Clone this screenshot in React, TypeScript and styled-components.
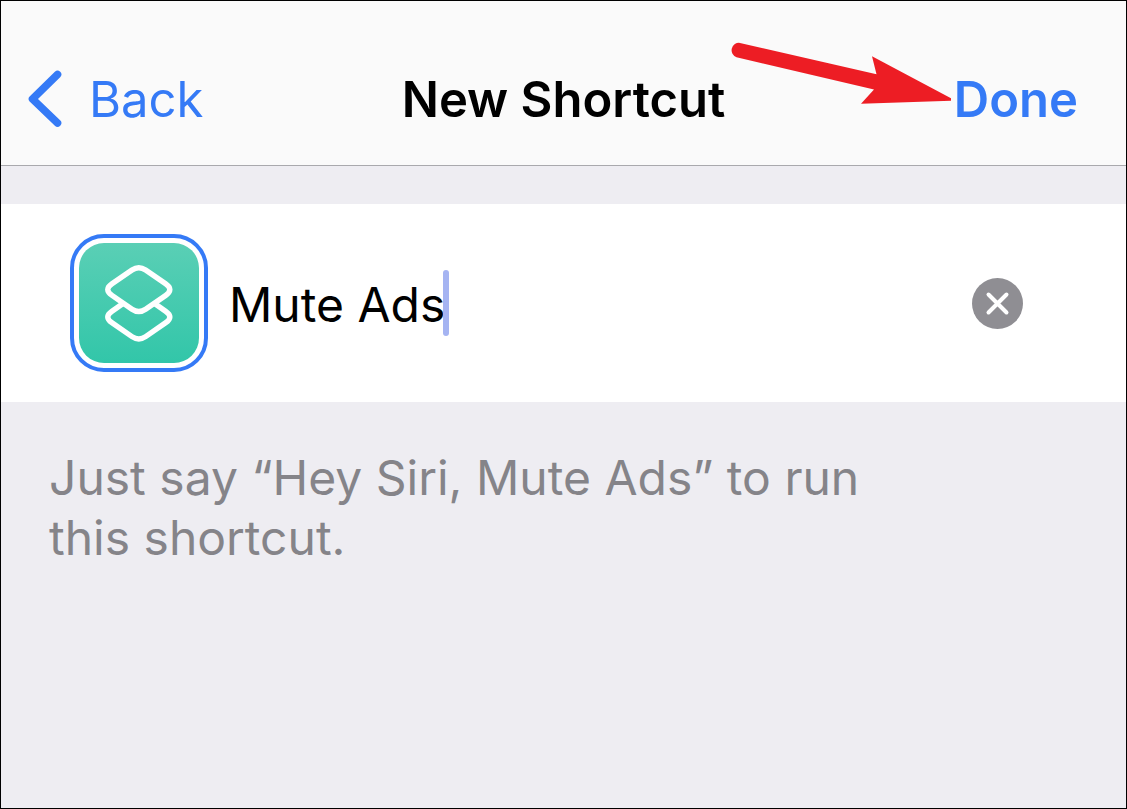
import React, { useState } from "react";
import styled, { createGlobalStyle } from "styled-components";

const GlobalStyle = createGlobalStyle`
  *, *::before, *::after { box-sizing: border-box; }
  body {
    margin: 0;
    background: #eeedf2;
    font-family: Inter, "Liberation Sans", sans-serif;
    font-size: 48px;
    line-height: 60px;
    color: #000;
  }
  button, input { font: inherit; }
`;

const Screen = styled.main`
  min-height: 100vh;
  background: #eeedf2;
  border: 1px solid #000;
`;

const NavBar = styled.header`
  display: grid;
  grid-template-columns: 1fr auto 1fr;
  align-items: center;
  padding: 69px 26px 35px;
  background: #fafafa;
  border-bottom: 1px solid #a9a9ad;
  font-size: 49px;
`;

const NavButton = styled.button<{ $strong?: boolean }>`
  display: flex;
  align-items: center;
  gap: 26px;
  padding: 0;
  border: 0;
  background: none;
  color: #357af6;
  font-weight: ${(p) => (p.$strong ? 600 : 400)};
  cursor: pointer;
`;

const Title = styled.h1`
  margin: 0;
  font-size: inherit;
  font-weight: 600;
`;

const NavStart = styled.div`
  display: flex;
`;

const NavEnd = styled.div`
  position: relative;
  justify-self: end;
  display: flex;
  margin-right: 22px;
`;

const Pointer = styled.svg`
  position: absolute;
  top: -28px;
  right: 100%;
  margin-right: 3px;
  pointer-events: none;
`;

const NameRow = styled.section`
  display: flex;
  align-items: center;
  gap: 21px;
  margin-top: 38px;
  padding: 30px 103px 30px 69px;
  background: #fff;
`;

const IconButton = styled.button`
  display: block;
  flex: none;
  padding: 0;
  border: 0;
  background: none;
  cursor: pointer;

  svg { display: block; }
`;

const Field = styled.div`
  position: relative;
  display: flex;
  margin-right: auto;
`;

const NameInput = styled.input`
  field-sizing: content;
  min-width: 10px;
  height: 62px;
  padding: 2px 0 0;
  border: 0;
  outline: 0;
  background: none;
  color: #000;
  caret-color: transparent;
`;

const Caret = styled.span`
  position: absolute;
  top: -2px;
  right: -4px;
  width: 6px;
  height: 66px;
  border-radius: 3px;
  background: #a5b4f2;
`;

const Hint = styled.p`
  max-width: 920px;
  margin: 0;
  padding: 46px 48px;
  color: #858489;
`;

function ShortcutIcon() {
  return (
    <svg width="138" height="138" viewBox="0 0 138 138" fill="none" aria-hidden="true">
      <defs>
        <linearGradient id="tile" x1="0" y1="0" x2="0" y2="1">
          <stop offset="0" stopColor="#5acfb5" />
          <stop offset="1" stopColor="#32c6a9" />
        </linearGradient>
      </defs>
      <rect x="2" y="2" width="134" height="134" rx="32" stroke="#357af6" strokeWidth="4" />
      <rect x="9" y="9" width="120" height="120" rx="25" fill="url(#tile)" />
      <g stroke="#fff" strokeWidth="5.4" strokeLinejoin="round">
        <path d="M62 36Q68.8 31.3 75.6 36L95.6 49.8Q104.1 55.6 95.6 61.4L75.6 75.2Q68.8 79.9 62 75.2L42 61.4Q33.5 55.6 42 49.8Z" />
        <path d="M53.4 69.3L42 77.2Q33.5 83 42 88.8L62 102.6Q68.8 107.3 75.6 102.6L95.6 88.8Q104.1 83 95.6 77.2L84.2 69.3" />
      </g>
    </svg>
  );
}

export default function App() {
  const [name, setName] = useState("Mute Ads");

  return (
    <>
      <GlobalStyle />
      <Screen>
        <NavBar>
          <NavStart>
            <NavButton type="button">
              <svg width="36" height="60" viewBox="0 0 36 60" fill="none" aria-hidden="true">
                <path d="M30.5 4.5L5.5 29L30.5 53" stroke="#357af6" strokeWidth="7.6" strokeLinecap="round" strokeLinejoin="round" />
              </svg>
              Back
            </NavButton>
          </NavStart>
          <Title>New Shortcut</Title>
          <NavEnd>
            <Pointer width="221" height="62" viewBox="0 0 221 62" aria-hidden="true">
              <path
                d="M10 .9L146.5 32.3L142 14.3L221 56.3V58.7L131 61.7L144 47.5L6.5 15.2A7.4 7.4 0 0 1 10 .9Z"
                fill="#ed1d24"
              />
            </Pointer>
            <NavButton type="button" $strong>Done</NavButton>
          </NavEnd>
        </NavBar>

        <NameRow>
          <IconButton type="button" aria-label="Choose icon">
            <ShortcutIcon />
          </IconButton>
          <Field>
            <NameInput
              aria-label="Shortcut name"
              value={name}
              onChange={(e) => setName(e.target.value)}
            />
            <Caret />
          </Field>
          <IconButton type="button" aria-label="Clear name" onClick={() => setName("")}>
            <svg width="51" height="51" viewBox="0 0 51 51" fill="none" aria-hidden="true">
              <circle cx="25.5" cy="25.5" r="25.5" fill="#8f8e93" />
              <path d="M16.5 16.5L34.5 34.5M34.5 16.5L16.5 34.5" stroke="#fff" strokeWidth="4" strokeLinecap="round" />
            </svg>
          </IconButton>
        </NameRow>

        <Hint>{`Just say “Hey Siri, ${name}” to run this shortcut.`}</Hint>
      </Screen>
    </>
  );
}
